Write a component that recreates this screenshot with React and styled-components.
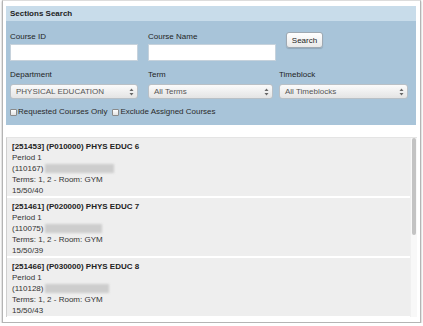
import React from "react";
import styled, { createGlobalStyle } from "styled-components";

const Global = createGlobalStyle`
  html, body {
    margin: 0;
    padding: 0;
    background: #ffffff;
  }
  body {
    font-family: "Liberation Sans", Arial, sans-serif;
    font-size: 8px;
    color: #333;
  }
`;

const Window = styled.div`
  box-sizing: border-box;
  margin: 0 0 0 2px;
  width: 419px;
  height: 323px;
  border: 1px solid #b4b4b4;
  border-top-color: #dcdcdc;
  box-shadow: 0 1px 2px rgba(0, 0, 0, 0.35);
  padding: 5px 3px 0 3px;
  background: #fff;
  display: flex;
  flex-direction: column;
`;

const Panel = styled.section`
  width: 410px;
  background: #a8c4d9;
`;

const PanelHeader = styled.div`
  height: 15px;
  line-height: 15px;
  background: #c8dcea;
  padding-left: 4px;
  font-weight: bold;
  color: #1e1e1e;
`;

const PanelBody = styled.div`
  height: 104px;
  box-sizing: border-box;
  padding: 10px 0 0 4px;
  display: grid;
  grid-template-columns: 128px 128px 130px;
  column-gap: 10px;
  align-content: start;
`;

const Field = styled.div`
  display: flex;
  flex-direction: column;
  margin-left: ${(p) => p.$shift || 0}px;
`;

const Label = styled.label`
  height: 12px;
  line-height: 11px;
  color: #1f1f1f;
`;

const TextInput = styled.input`
  box-sizing: border-box;
  width: 128px;
  height: 17px;
  margin: 1px 0 0;
  border: 1px solid #c6d2dc;
  background: #fff;
  padding: 0;
`;

const Button = styled.button`
  align-self: start;
  box-sizing: border-box;
  width: 37px;
  height: 16px;
  margin-top: 1px;
  padding: 0;
  font-family: inherit;
  font-size: 8px;
  color: #222;
  border: 1px solid #9fa9b2;
  border-radius: 3px;
  background: linear-gradient(#ffffff, #e9e9e9);
  box-shadow: 0 1px 1px rgba(0, 0, 0, 0.15);
`;

const SelectBox = styled.div`
  box-sizing: border-box;
  width: ${(p) => p.$w}px;
  height: 15px;
  margin-top: 3px;
  border: 1px solid #b9c0c6;
  border-radius: 3px;
  background: linear-gradient(#fbfbfb, #e4e4e4);
  display: flex;
  align-items: center;
  justify-content: space-between;
  padding: 0 3px 0 5px;
  color: #555;
`;

const Row = styled.div`
  grid-column: 1 / -1;
  display: flex;
  margin-top: ${(p) => p.$top}px;
`;

const Check = styled.label`
  display: flex;
  align-items: center;
  margin-right: 5px;
  color: #2a2a2a;
`;

const Box = styled.span`
  box-sizing: border-box;
  width: 7px;
  height: 7px;
  margin-top: 3px;
  margin-right: 1px;
  border: 1px solid #8a8a8a;
  border-radius: 1px;
  background: linear-gradient(#fff, #e2e2e2);
`;

const ListBox = styled.div`
  box-sizing: border-box;
  margin-top: 12px;
  width: 411px;
  height: 180px;
  border-left: 1px solid #cfcfcf;
  border-top: 1px solid #e4e4e4;
  display: flex;
`;

const Items = styled.div`
  flex: 1;
  overflow: hidden;
  display: flex;
  flex-direction: column;
  gap: 2px;
`;

const Track = styled.div`
  width: 7px;
  padding: 0 1px 0 1px;
  box-sizing: border-box;
  background: #f8f8f8;
  border-left: 1px solid #f0f0f0;
`;

const Thumb = styled.div`
  height: 97px;
  border-radius: 3px;
  background: #c3c3c3;
`;

const Item = styled.div`
  box-sizing: border-box;
  flex: none;
  background: #eeeeee;
  padding: 3px 0 0 5px;
  height: 58px;
  line-height: 11px;
`;

const Title = styled.div`
  font-weight: bold;
  color: #222;
`;

const Line = styled.div`
  display: flex;
  align-items: center;
`;

const Blur = styled.span`
  display: inline-block;
  width: ${(p) => p.$w}px;
  height: 9px;
  margin-left: 2px;
  background: #cdcdcd;
  filter: blur(1.2px);
`;

function Arrows() {
  return (
    <svg width="5" height="8" viewBox="0 0 5 8">
      <path d="M2.5 0.5 L4.5 3 L0.5 3 Z" fill="#666" />
      <path d="M2.5 7.5 L4.5 5 L0.5 5 Z" fill="#666" />
    </svg>
  );
}

const sections = [
  { id: "251453", code: "P010000", grade: 6, num: "110167", blur: 69, seats: "15/50/40" },
  { id: "251461", code: "P020000", grade: 7, num: "110075", blur: 57, seats: "15/50/39" },
  { id: "251466", code: "P030000", grade: 8, num: "110128", blur: 64, seats: "15/50/43" },
];

export default function App() {
  return (
    <>
      <Global />
      <Window>
        <Panel>
          <PanelHeader>Sections Search</PanelHeader>
          <PanelBody>
            <Field>
              <Label>Course ID</Label>
              <TextInput />
            </Field>
            <Field>
              <Label>Course Name</Label>
              <TextInput />
            </Field>
            <Button>Search</Button>

            <Row $top={8}>
              <Field>
                <Label>Department</Label>
                <SelectBox $w={128}>
                  PHYSICAL EDUCATION
                  <Arrows />
                </SelectBox>
              </Field>
              <Field $shift={10}>
                <Label>Term</Label>
                <SelectBox $w={125}>
                  All Terms
                  <Arrows />
                </SelectBox>
              </Field>
              <Field $shift={6}>
                <Label>Timeblock</Label>
                <SelectBox $w={129}>
                  All Timeblocks
                  <Arrows />
                </SelectBox>
              </Field>
            </Row>

            <Row $top={7}>
              <Check>
                <Box />
                Requested Courses Only
              </Check>
              <Check>
                <Box />
                Exclude Assigned Courses
              </Check>
            </Row>
          </PanelBody>
        </Panel>

        <ListBox>
          <Items>
            {sections.map((s) => (
              <Item key={s.id}>
                <Title>
                  [{s.id}] ({s.code}) PHYS EDUC {s.grade}
                </Title>
                <div>Period 1</div>
                <Line>
                  ({s.num})
                  <Blur $w={s.blur} />
                </Line>
                <div>Terms: 1, 2 - Room: GYM</div>
                <div>{s.seats}</div>
              </Item>
            ))}
          </Items>
          <Track>
            <Thumb />
          </Track>
        </ListBox>
      </Window>
    </>
  );
}
